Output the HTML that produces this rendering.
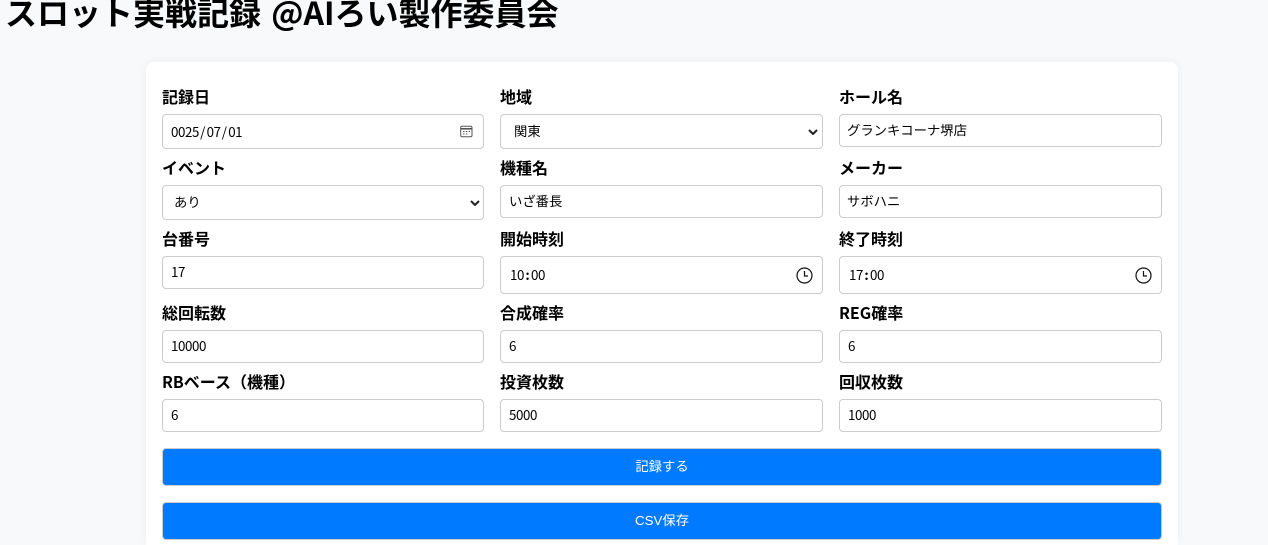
<!DOCTYPE html>
<html lang="ja">
<head>
<meta charset="utf-8">
<title>スロット実戦記録</title>
<style>
html,body{margin:0;padding:0;width:1268px;height:545px;overflow:hidden;background:#f8f9fa;}
body{position:relative;font-family:"Noto Sans CJK JP","Liberation Sans",sans-serif;color:#000;}
h1{position:absolute;left:5px;top:-10px;margin:0;font-size:32px;font-weight:700;line-height:44px;white-space:nowrap;color:#000;word-spacing:3px;}
.card{position:absolute;left:146px;top:62px;width:1032px;height:483px;background:#fff;border-radius:8px 8px 0 0;box-shadow:0 0 10px rgba(0,0,0,.05);}
.l{position:absolute;font-size:16px;font-weight:700;line-height:22px;white-space:nowrap;}
.b{position:absolute;box-sizing:border-box;background:#fff;border:1px solid #ccc;border-radius:4px;font-size:13.33px;line-height:20px;white-space:nowrap;}
.b span{position:absolute;left:7px;top:50%;transform:translateY(calc(-50% - 1px));}
.b span.k{transform:translateY(-50%);}
.m span{letter-spacing:-.4px;}
.m i{display:inline-block;font-style:normal;text-align:center;letter-spacing:0;}
.s{width:7.6px}.o{width:7px;font-weight:700}
.b svg{position:absolute;}
.c1{left:162px;width:322px}.c2{left:500px;width:323px}.c3{left:839px;width:323px}
.btn{position:absolute;left:162px;width:1000px;height:38px;box-sizing:border-box;background:#007bff;border:1px solid #ccc;border-radius:4px;color:#fff;font-family:"Liberation Sans","Noto Sans CJK JP",sans-serif;font-size:13.33px;line-height:36px;text-align:center;}
</style>
</head>
<body>
<h1>スロット実戦記録 @AIろい製作委員会</h1>
<div class="card"></div>

<div class="l c1" style="top:85px">記録日</div>
<div class="l c2" style="top:85px">地域</div>
<div class="l c3" style="top:85px">ホール名</div>
<div class="b m c1" style="top:114px;height:35px"><span class="k" style="left:8px">0025<i class="s">/</i>07<i class="s">/</i>01</span>
<svg style="right:10px;top:10px" width="13" height="13" viewBox="0 0 13 13" fill="none" stroke="#555" stroke-width="1"><rect x=".7" y="1.2" width="11.3" height="10.6" rx="1.5"/><path d="M1 3.8h11" stroke-width="1.6"/><path d="M3 6.5h1.5M5.8 6.5h1.5M8.6 6.5h1.5M3 9h1.5M5.8 9h1.5"/></svg></div>
<div class="b c2" style="top:114px;height:35px"><span style="left:13px">関東</span>
<svg style="left:307px;top:14px" width="10" height="6" viewBox="0 0 10 6" fill="none" stroke="#222" stroke-width="2"><path d="M1 1l4 4 4-4"/></svg></div>
<div class="b c3" style="top:114px;height:33px"><span>グランキコーナ堺店</span></div>

<div class="l c1" style="top:156px">イベント</div>
<div class="l c2" style="top:156px">機種名</div>
<div class="l c3" style="top:156px">メーカー</div>
<div class="b c1" style="top:185px;height:35px"><span style="left:11px">あり</span>
<svg style="left:307px;top:14px" width="10" height="6" viewBox="0 0 10 6" fill="none" stroke="#222" stroke-width="2"><path d="M1 1l4 4 4-4"/></svg></div>
<div class="b c2" style="top:185px;height:33px"><span style="left:8px">いざ番長</span></div>
<div class="b c3" style="top:185px;height:33px"><span>サボハニ</span></div>

<div class="l c1" style="top:227px">台番号</div>
<div class="l c2" style="top:227px">開始時刻</div>
<div class="l c3" style="top:227px">終了時刻</div>
<div class="b m c1" style="top:256px;height:33px"><span style="left:8px">17</span></div>
<div class="b m c2" style="top:256px;height:38px"><span class="k" style="left:9px">10<i class="o">:</i>00</span>
<svg style="left:295px;top:10px" width="17" height="17" viewBox="0 0 17 17" fill="none" stroke="#111" stroke-width="1.2"><circle cx="8.5" cy="8.5" r="7.5"/><path d="M8.5 4v5h3.5"/></svg></div>
<div class="b m c3" style="top:256px;height:38px"><span class="k" style="left:9px">17<i class="o">:</i>00</span>
<svg style="left:295px;top:10px" width="17" height="17" viewBox="0 0 17 17" fill="none" stroke="#111" stroke-width="1.2"><circle cx="8.5" cy="8.5" r="7.5"/><path d="M8.5 4v5h3.5"/></svg></div>

<div class="l c1" style="top:301px">総回転数</div>
<div class="l c2" style="top:301px">合成確率</div>
<div class="l c3" style="top:301px">REG確率</div>
<div class="b m c1" style="top:330px;height:33px"><span style="left:8px">10000</span></div>
<div class="b m c2" style="top:330px;height:33px"><span style="left:8px">6</span></div>
<div class="b m c3" style="top:330px;height:33px"><span style="left:8px">6</span></div>

<div class="l c1" style="top:370px">RBベース（機種）</div>
<div class="l c2" style="top:370px">投資枚数</div>
<div class="l c3" style="top:370px">回収枚数</div>
<div class="b m c1" style="top:399px;height:33px"><span style="left:8px">6</span></div>
<div class="b m c2" style="top:399px;height:33px"><span style="left:8px">5000</span></div>
<div class="b m c3" style="top:399px;height:33px"><span style="left:8px">1000</span></div>

<div class="btn" style="top:448px">記録する</div>
<div class="btn" style="top:502px">CSV保存</div>
</body>
</html>
